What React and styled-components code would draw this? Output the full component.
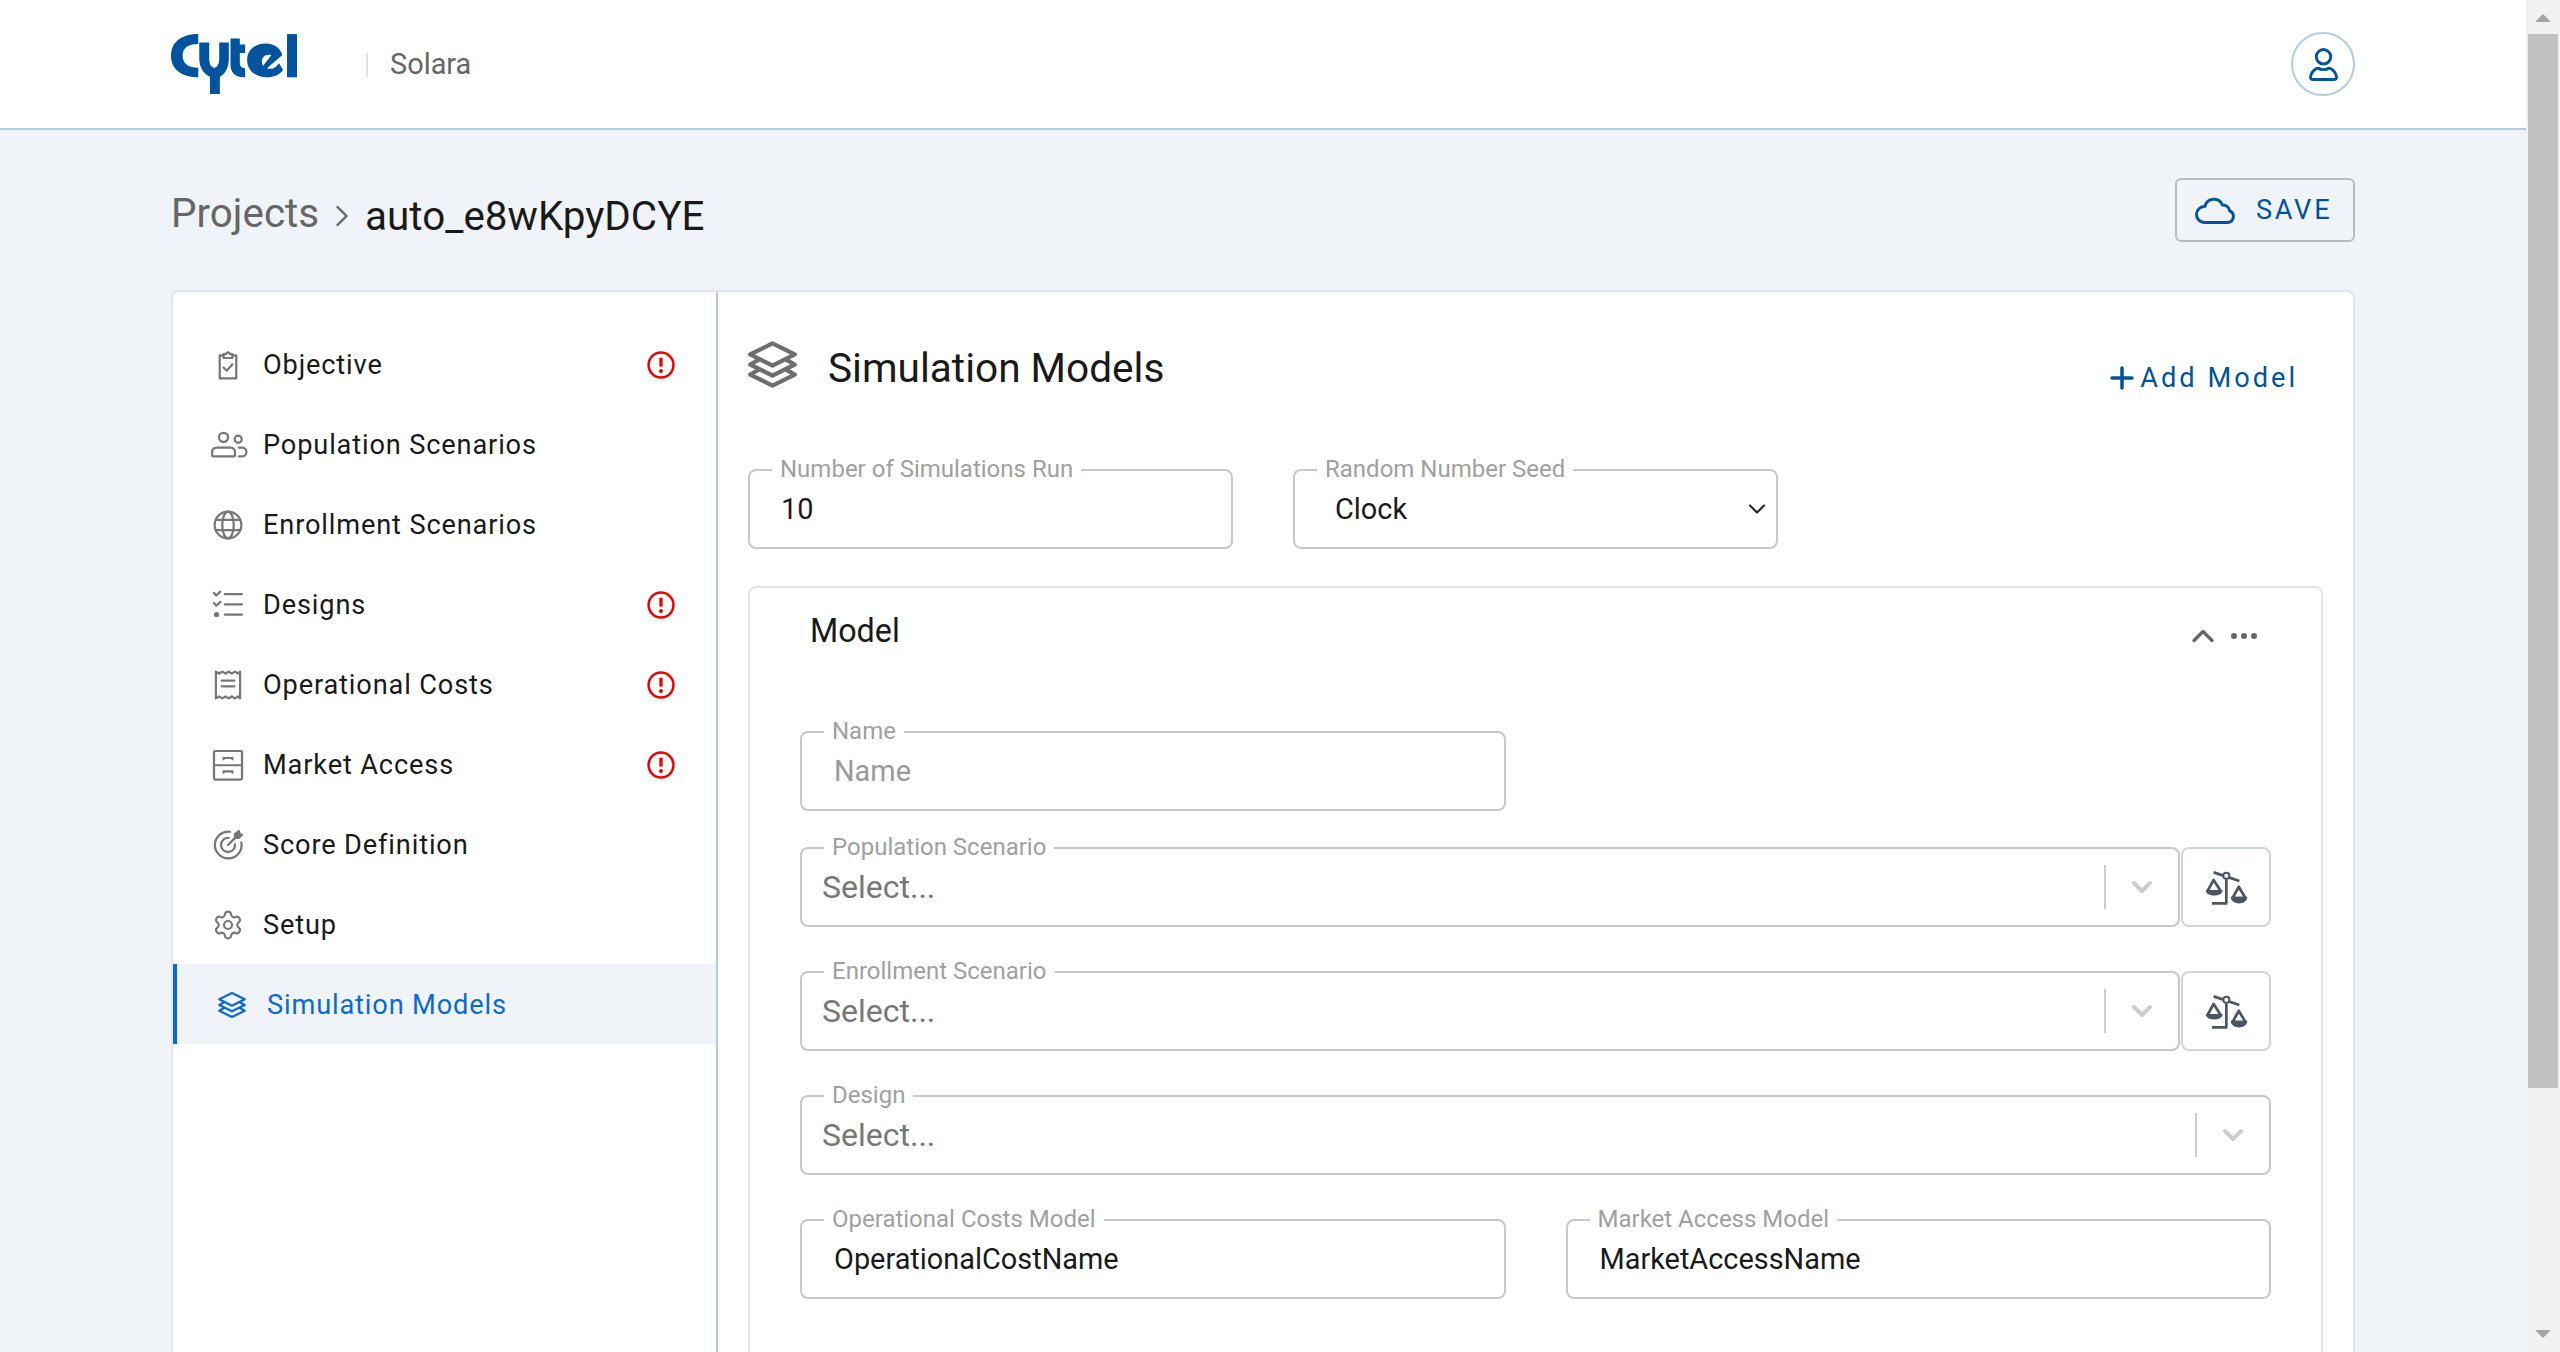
import React from "react";
import styled, { createGlobalStyle } from "styled-components";
import { ChevronDown, ChevronUp, ChevronRight, Plus, Settings } from "lucide-react";

const GlobalStyle = createGlobalStyle`
  *, *::before, *::after {
    box-sizing: border-box;
  }
  body {
    margin: 0;
    padding-right: 34px;
    background: #f0f4f8;
    font-family: Roboto, "Liberation Sans", sans-serif;
    color: #1a1a1a;
  }
  input, select {
    font-family: inherit;
  }
`;

const ScrollTrack = styled.div`
  position: fixed;
  top: 0;
  right: 0;
  bottom: 0;
  width: 34px;
  background: #f1f1f1;
`;

const ScrollThumb = styled.div`
  position: absolute;
  top: 34px;
  left: 2px;
  width: 30px;
  height: 1054px;
  background: #c1c1c1;
`;

const ScrollArrow = styled.div`
  position: absolute;
  left: 9px;
  ${(p) => (p.$down ? "bottom: 14px;" : "top: 14px;")}
  border-left: 8px solid transparent;
  border-right: 8px solid transparent;
  ${(p) => (p.$down ? "border-top: 8px solid #a3a3a3;" : "border-bottom: 8px solid #a3a3a3;")}
`;

const Header = styled.header`
  height: 130px;
  display: flex;
  align-items: center;
  background: #fff;
  border-bottom: 2px solid #b5cce0;
  padding: 0 171px;
`;

const AppName = styled.div`
  margin-left: 69px;
  padding-left: 24px;
  position: relative;
  font-size: 28.9px;
  color: #666;
  &::before {
    content: "";
    position: absolute;
    left: 0;
    top: 6px;
    bottom: 4px;
    width: 2px;
    background: #dfe3e8;
  }
`;

const UserButton = styled.button`
  margin-left: auto;
  width: 64px;
  height: 64px;
  border-radius: 50%;
  border: 2px solid #b5cce0;
  background: #fff;
  display: flex;
  align-items: center;
  justify-content: center;
  padding: 0;
`;

const Page = styled.main`
  padding: 48px 171px 32px;
`;

const TopRow = styled.div`
  display: flex;
  justify-content: space-between;
  align-items: flex-start;
  margin-bottom: 48px;
`;

const Breadcrumb = styled.div`
  display: flex;
  align-items: center;
  height: 63px;
  padding-top: 13px;
`;

const CrumbLink = styled.span`
  font-size: 40.4px;
  color: #666;
  margin-top: -6px;
`;

const CrumbChevron = styled(ChevronRight)`
  margin: -6px 5px -6px 5px;
  color: #666;
`;

const CrumbCurrent = styled.span`
  font-size: 40.4px;
  color: #1a1a1a;
`;

const SaveButton = styled.button`
  width: 180px;
  height: 64px;
  border: 2px solid #b8bcc0;
  border-radius: 6px;
  background: transparent;
  color: #00539f;
  font-family: inherit;
  font-size: 27.2px;
  letter-spacing: 2.7px;
  display: flex;
  align-items: center;
  gap: 21px;
  padding: 0 0 0 18px;
`;

const Card = styled.section`
  display: grid;
  grid-template-columns: 545px 1fr;
  background: #fff;
  border: 2px solid #e2e6ea;
  border-radius: 8px;
`;

const Sidebar = styled.nav`
  border-right: 2px solid #b5cce0;
  padding-top: 32px;
`;

const NavItem = styled.div`
  height: 80px;
  display: flex;
  align-items: center;
  gap: 21px;
  padding: 1px 41px 0 41px;
  font-size: 27.2px;
  letter-spacing: 0.85px;
  color: ${(p) => (p.$active ? "#0a6ad0" : "#1a1a1a")};
  background: ${(p) => (p.$active ? "#f0f4f8" : "transparent")};
  border-left: ${(p) => (p.$active ? "4px solid #0a6ad0" : "none")};
`;

const NavIcon = styled.svg`
  width: 28px;
  height: 28px;
  flex: none;
  overflow: visible;
  fill: none;
  stroke: ${(p) => (p.$active ? "#0a6ad0" : "#777")};
  stroke-width: 1.75;
  stroke-linejoin: round;
  stroke-linecap: round;
`;

const TitleIcon = styled(NavIcon)`
  width: 49px;
  height: 49px;
  margin-top: -6px;
  stroke: #6e6e6e;
  stroke-width: 1.9;
`;

const NavGear = styled(Settings)`
  flex: none;
  margin: -2px;
  color: #777;
`;

const AlertIcon = styled.svg`
  width: 28px;
  height: 28px;
  margin-left: auto;
  flex: none;
`;

const Content = styled.div`
  padding: 0 30px;
`;

const TitleRow = styled.div`
  display: flex;
  align-items: center;
  height: 177px;
  padding-bottom: 26px;
`;

const Title = styled.h1`
  margin: 0 0 0 31px;
  font-size: 40.6px;
  font-weight: 400;
`;

const AddModel = styled.button`
  margin: 20px 25px 0 auto;
  display: flex;
  align-items: center;
  gap: 1px;
  border: none;
  background: none;
  padding: 0;
  color: #00539f;
  font-family: inherit;
  font-size: 27.2px;
  letter-spacing: 3px;
`;

const FieldRow = styled.div`
  display: flex;
  gap: ${(p) => p.$gap || "60px"};
  margin-bottom: ${(p) => p.$mb || "0"};
`;

const Field = styled.div`
  position: relative;
  width: ${(p) => p.$width || "100%"};
  height: 80px;
  flex: ${(p) => (p.$width ? "none" : "1")};
  display: flex;
  align-items: center;
  border: 2px solid #c8c8c8;
  border-radius: 8px;
  background: #fff;
`;

const Legend = styled.label`
  position: absolute;
  left: 22px;
  top: -16px;
  padding: 0 8px;
  background: #fff;
  font-size: 24px;
  line-height: 28px;
  color: #a0a0a0;
`;

const TextInput = styled.input`
  width: 100%;
  border: none;
  outline: none;
  background: none;
  padding: 0 0 0 ${(p) => p.$indent || "31px"};
  font-size: 28.9px;
  color: #1a1a1a;
  &::placeholder {
    color: #9a9a9a;
  }
`;

const NativeSelect = styled.select`
  width: 100%;
  height: 100%;
  border: none;
  outline: none;
  background: none;
  appearance: none;
  padding: 0 0 0 40px;
  font-size: 28.9px;
  color: #1a1a1a;
`;

const SelectCaret = styled(ChevronDown)`
  position: absolute;
  right: 5px;
  top: 24px;
  pointer-events: none;
`;

const ModelCard = styled.section`
  margin-top: 37px;
  min-height: 974px;
  border: 2px solid #e2e6ea;
  border-bottom: none;
  border-radius: 8px 8px 0 0;
  padding: 0 50px;
`;

const ModelHeader = styled.div`
  height: 143px;
  display: flex;
  align-items: flex-start;
  padding: 24px 14px 0 10px;
  font-size: 32.3px;
`;

const ModelActions = styled.div`
  margin-left: auto;
  display: flex;
  align-items: center;
  gap: 10px;
  margin-top: 6px;
  color: #666;
`;

const Dots = styled.div`
  display: flex;
  gap: 4px;
`;

const Dot = styled.span`
  width: 6px;
  height: 6px;
  border-radius: 50%;
  background: #666;
`;

const SelectBox = styled.div`
  flex: 1;
  height: 80px;
  position: relative;
  display: flex;
  align-items: center;
  border: 2px solid #c8c8c8;
  border-radius: 8px;
  padding-left: 20px;
  font-size: 32px;
  color: #777;
`;

const SelectTools = styled.div`
  margin-left: auto;
  display: flex;
  align-items: center;
  height: 44px;
  width: 74px;
  border-left: 2px solid #ccc;
  justify-content: center;
  color: #ccc;
`;

const CompareButton = styled.button`
  width: 90px;
  height: 80px;
  margin-left: 1px;
  border: 2px solid #d0d5dc;
  border-radius: 8px;
  background: #fff;
  padding: 0;
  display: flex;
  align-items: center;
  justify-content: center;
`;

const CytelLogo = () => (
  <svg width="126" height="60" viewBox="33 27 379 180" aria-label="Cytel" fill="#00539f">
    <path d="M115 27C70 27 33 48 33 92C33 136 70 157 115 157V128C88 128 68 118 68 92C68 66 88 57 115 57Z" />
    <path d="M118 52H148V100C148 120 154 128 163 128C172 128 178 120 178 100V52H207V100C207 128 196 148 180 155V207H150V155C132 148 118 128 118 100Z" />
    <path d="M212 40H240V58H256V84H240V115C240 125 246 130 256 130V157C228 158 212 145 212 118Z" />
    <path fillRule="evenodd" d="M318 55C345 55 362 70 368 90L322 130C335 135 350 128 358 115L370 135C360 150 340 157 322 157C285 157 262 135 262 105C262 75 285 55 318 55ZM310 122C300 105 310 85 335 90Z" />
    <rect x="382" y="27" width="30" height="130" />
  </svg>
);

const UserIcon = () => (
  <svg width="29" height="33" viewBox="0 0 28 32" fill="none" stroke="#00539f" strokeWidth="2.8" strokeLinejoin="round">
    <circle cx="14" cy="8.5" r="7" />
    <path d="M3.5 30.5Q1 30.5 1.5 27.5C2.5 22 7 19.5 9 19.5 11 21.5 17 21.5 19 19.5 21 19.5 25.5 22 26.5 27.5Q27 30.5 24.5 30.5Z" />
  </svg>
);

const CloudIcon = () => (
  <svg width="40" height="28" viewBox="0 0 40 28" fill="none" stroke="#00539f" strokeWidth="2.9" strokeLinejoin="round">
    <path d="M9 26.5H32.5a6 6 0 0 0 2-11.6A6.5 6.5 0 0 0 27.5 9 9.2 9.2 0 0 0 10 10.5 8 8 0 0 0 9 26.5Z" />
  </svg>
);

const ScaleIcon = () => (
  <svg width="43" height="35" viewBox="30 28 125 102" fill="#4b5563" stroke="#4b5563" strokeWidth="8">
    <path d="M55 35L130 60" fill="none" />
    <path d="M92 55V125M50 125H95" fill="none" />
    <circle cx="92" cy="45" r="9" fill="#fff" strokeWidth="6" />
    <path d="M55 57L37 90H76Z" fill="#fff" strokeLinejoin="round" />
    <path d="M32 86H81C81 108 32 108 32 86Z" stroke="none" />
    <path d="M128 77L110 110H148Z" fill="#fff" strokeLinejoin="round" />
    <path d="M105 106H153C153 132 105 132 105 106Z" stroke="none" />
  </svg>
);

const ObjectiveGlyph = () => (
  <>
    <path d="M8.5 4.5H5.5V22.5H18.5V4.5H15.5" />
    <path d="M8.5 6.5V3.5H10.5C10.8 1.5 13.2 1.5 13.5 3.5H15.5V6.5Z" />
    <path d="M8.5 14L11 16.5 15.5 11.5" />
  </>
);

const PopulationGlyph = () => (
  <>
    <circle cx="8.5" cy="6" r="3.6" />
    <path d="M-0.5 20V17.5A3.5 3.5 0 0 1 3 14H14A3.5 3.5 0 0 1 17.5 17.5V20Q17.5 21 16.5 21H0.5Q-0.5 21-0.5 20Z" />
    <circle cx="20" cy="7.5" r="2.8" />
    <path d="M20.5 14H23A3.5 3.5 0 0 1 26.5 17.5 3.5 3.5 0 0 1 23 21H20.5" />
  </>
);

const GlobeGlyph = () => (
  <>
    <circle cx="12" cy="12" r="10.5" />
    <ellipse cx="12" cy="12" rx="4.5" ry="10.5" />
    <path d="M2.5 8H21.5M2.5 16H21.5" />
  </>
);

const DesignsGlyph = () => (
  <>
    <path d="M9.5 3.5H23M9.5 11.5H23M9.5 19.5H23" />
    <path d="M1 2.5L2.8 4.5 6 1.5M1 10.5L2.8 12.5 6 9.5" />
    <circle cx="3" cy="19.5" r="1.2" fill="#777" />
  </>
);

const CostsGlyph = () => (
  <>
    <path d="M2.5 1.5L5 3 7.5 1.5 10 3 12.5 1.5 15 3 17.5 1.5 20 3 21.5 1.5V22.5L20 21 17.5 22.5 15 21 12.5 22.5 10 21 7.5 22.5 5 21 2.5 22.5Z" />
    <path d="M7 8.5H17M7 13H17" />
  </>
);

const MarketGlyph = () => (
  <>
    <rect x="1" y="1" width="22" height="22.5" rx="1" />
    <path d="M1 12.2H23M8.5 7.5V6.5H15.5V7.5M8.5 18V17H15.5V18" />
  </>
);

const ScoreGlyph = () => (
  <>
    <path d="M22.5 10A10.5 10.5 0 1 1 13.5 1.6" />
    <path d="M17.5 11.5A5.5 5.5 0 1 1 12.5 6.5" />
    <path d="M12 12L19 5" />
    <path d="M17.5 3.5L20.5 1 21 3.5 23 4 20.5 6.5H17.5Z" fill="#777" />
  </>
);

const LayersGlyph = () => (
  <>
    <path d="M12 2.5L22 7.5 12 12.5 2 7.5Z" />
    <path d="M5.5 10L2 12 12 17 22 12 18.5 10" />
    <path d="M5.5 14.5L2 16.5 12 21.5 22 16.5 18.5 14.5" />
  </>
);

const navItems = [
  { label: "Objective", glyph: <ObjectiveGlyph />, alert: true },
  { label: "Population Scenarios", glyph: <PopulationGlyph /> },
  { label: "Enrollment Scenarios", glyph: <GlobeGlyph /> },
  { label: "Designs", glyph: <DesignsGlyph />, alert: true },
  { label: "Operational Costs", glyph: <CostsGlyph />, alert: true },
  { label: "Market Access", glyph: <MarketGlyph />, alert: true },
  { label: "Score Definition", glyph: <ScoreGlyph /> },
  { label: "Setup", gear: true },
  { label: "Simulation Models", glyph: <LayersGlyph />, active: true, box: "1 1.5 22 21" },
];

const Alert = () => (
  <AlertIcon viewBox="0 0 27 27" fill="none">
    <circle cx="13.5" cy="13.5" r="12" stroke="#f00000" strokeWidth="2.4" />
    <path d="M13.5 6.5V15" stroke="#f00000" strokeWidth="3.2" />
    <circle cx="13.5" cy="19.2" r="1.9" fill="#f00000" />
  </AlertIcon>
);

const ScenarioSelect = ({ label, compare }) => (
  <FieldRow $mb="44px" $gap="0">
    <SelectBox>
      <Legend>{label}</Legend>
      Select...
      <SelectTools>
        <ChevronDown size={32} strokeWidth={3} />
      </SelectTools>
    </SelectBox>
    {compare && (
      <CompareButton>
        <ScaleIcon />
      </CompareButton>
    )}
  </FieldRow>
);

export default function App() {
  return (
    <>
      <GlobalStyle />
      <Header>
        <CytelLogo />
        <AppName>Solara</AppName>
        <UserButton>
          <UserIcon />
        </UserButton>
      </Header>
      <Page>
        <TopRow>
          <Breadcrumb>
            <CrumbLink>Projects</CrumbLink>
            <CrumbChevron size={36} strokeWidth={1.6} />
            <CrumbCurrent>auto_e8wKpyDCYE</CrumbCurrent>
          </Breadcrumb>
          <SaveButton>
            <CloudIcon />
            SAVE
          </SaveButton>
        </TopRow>
        <Card>
          <Sidebar>
            {navItems.map((item) => (
              <NavItem key={item.label} $active={item.active}>
                {item.gear ? (
                  <NavGear size={32} strokeWidth={1.6} />
                ) : (
                  <NavIcon viewBox={item.box || "1 1 22 22"} $active={item.active}>
                    {item.glyph}
                  </NavIcon>
                )}
                {item.label}
                {item.alert && <Alert />}
              </NavItem>
            ))}
          </Sidebar>
          <Content>
            <TitleRow>
              <TitleIcon viewBox="1 1.5 22 21">
                <LayersGlyph />
              </TitleIcon>
              <Title>Simulation Models</Title>
              <AddModel>
                <Plus size={34} strokeWidth={2.5} />
                Add Model
              </AddModel>
            </TitleRow>
            <FieldRow>
              <Field $width="485px">
                <Legend>Number of Simulations Run</Legend>
                <TextInput defaultValue="10" />
              </Field>
              <Field $width="485px">
                <Legend>Random Number Seed</Legend>
                <NativeSelect defaultValue="Clock">
                  <option>Clock</option>
                  <option>Fixed</option>
                </NativeSelect>
                <SelectCaret size={28} color="#222" strokeWidth={1.8} />
              </Field>
            </FieldRow>
            <ModelCard>
              <ModelHeader>
                Model
                <ModelActions>
                  <ChevronUp size={36} strokeWidth={2.2} />
                  <Dots>
                    <Dot />
                    <Dot />
                    <Dot />
                  </Dots>
                </ModelActions>
              </ModelHeader>
              <FieldRow $mb="36px">
                <Field $width="706px">
                  <Legend>Name</Legend>
                  <TextInput $indent="32px" placeholder="Name" />
                </Field>
              </FieldRow>
              <ScenarioSelect label="Population Scenario" compare />
              <ScenarioSelect label="Enrollment Scenario" compare />
              <ScenarioSelect label="Design" />
              <FieldRow $gap="60px">
                <Field>
                  <Legend>Operational Costs Model</Legend>
                  <TextInput $indent="32px" defaultValue="OperationalCostName" />
                </Field>
                <Field>
                  <Legend>Market Access Model</Legend>
                  <TextInput $indent="32px" defaultValue="MarketAccessName" />
                </Field>
              </FieldRow>
            </ModelCard>
          </Content>
        </Card>
      </Page>
      <ScrollTrack>
        <ScrollArrow />
        <ScrollThumb />
        <ScrollArrow $down />
      </ScrollTrack>
    </>
  );
}
